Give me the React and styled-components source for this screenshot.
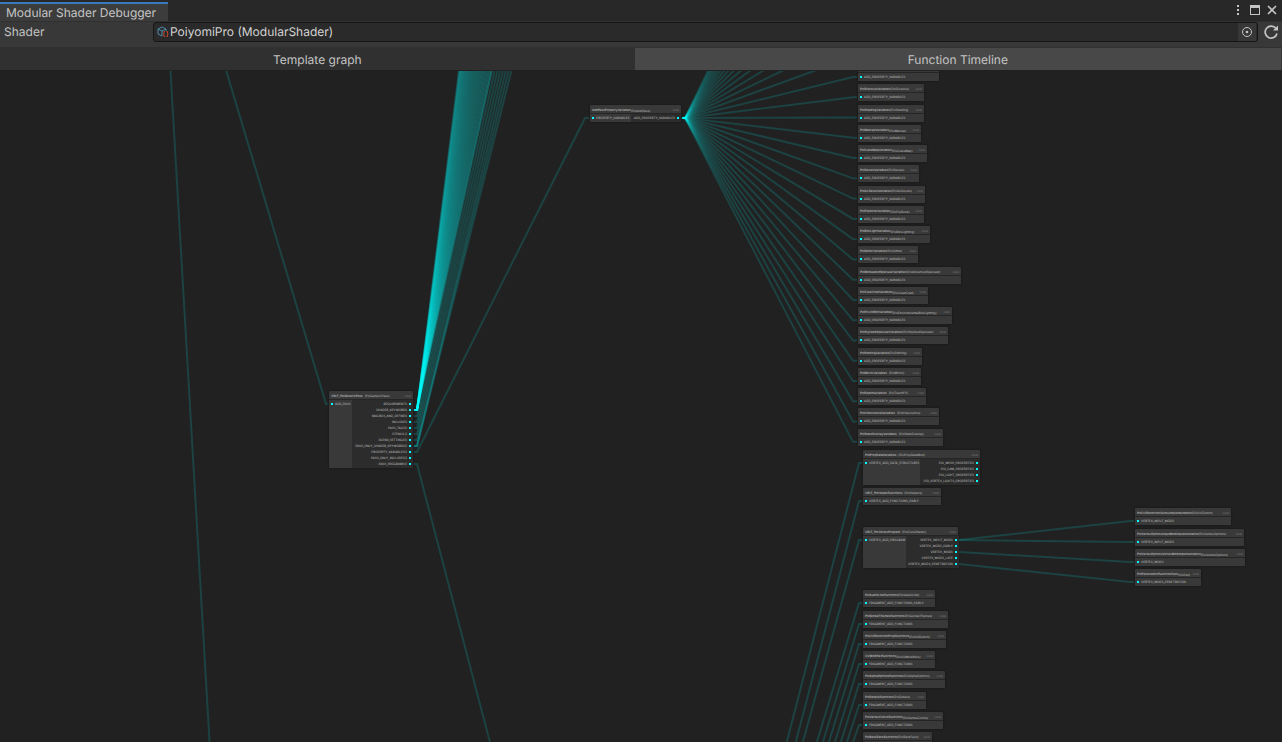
import React from "react";
import styled, { createGlobalStyle } from "styled-components";

const Global = createGlobalStyle`
  * { box-sizing: border-box; }
  html, body, #root { height: 100%; }
  body { margin: 0; background: #212121; color: #c4c4c4; font: 12px/16px Inter, sans-serif; overflow: hidden; text-rendering: geometricPrecision; }
`;

const Window = styled.div`
  display: flex;
  flex-direction: column;
  height: 100%;
  background: #383838;
`;

const TitleBar = styled.header`
  display: flex;
  justify-content: space-between;
  height: 21px;
  flex: none;
  padding-top: 2px;
  background: #282828;
`;

const WindowTab = styled.h1`
  margin: 0;
  padding: 1px 12px 0 6px;
  border-top: 2px solid #3a79bb;
  background: #3c3c3c;
  font-size: 12px;
  font-weight: 400;
  line-height: 16px;
`;

const WindowControls = styled.div`
  display: flex;
  gap: 3px;
  padding: 1px 3px 0 0;
`;

const IconButton = styled.button`
  display: grid;
  place-items: center;
  width: ${(p) => p.$size || 14}px;
  height: ${(p) => p.$size || 14}px;
  padding: 0;
  border: 0;
  background: ${(p) => p.$bg || "none"};
  color: #c4c4c4;
`;

const FieldRow = styled.div`
  display: flex;
  align-items: center;
  height: 26px;
  flex: none;
  padding: 0 3px 5px 4px;
  border-top: 1px solid #303030;
`;

const FieldLabel = styled.label`
  width: 149px;
  flex: none;
`;

const ObjectField = styled.div`
  display: flex;
  flex: 1;
  align-items: center;
  gap: 1px;
  height: 20px;
  margin-right: 5px;
  padding: 0 1px 0 3px;
  border: 1px solid #161616;
  border-radius: 3px;
  background: #2a2a2a;
`;

const ObjectInput = styled.input`
  flex: 1;
  min-width: 0;
  padding: 0;
  border: 0;
  outline: 0;
  background: none;
  color: #d2d2d2;
  font: 12px/16px Inter, sans-serif;
  text-rendering: inherit;
`;

const Tabs = styled.nav`
  display: flex;
  height: 23px;
  flex: none;
  padding-right: 1px;
  border-top: 1px solid #303030;
`;

const Tab = styled.button`
  flex: 1 1 auto;
  padding: 2px 0 0;
  border: 0;
  background: ${(p) => (p.$active ? "#303030" : "#484848")};
  color: #c4c4c4;
  font: 12px/16px Inter, sans-serif;
  text-rendering: inherit;
`;

const Graph = styled.main`
  position: relative;
  flex: 1;
  min-height: 0;
  overflow: hidden;
  border-top: 1px solid #212121;
  background: #212121;
`;

const Wires = styled.svg`
  position: absolute;
  inset: 0;
  width: 100%;
  height: 100%;
  fill: none;
  stroke: #00ffff;
  stroke-opacity: 0.15;
  stroke-width: 2;
`;

const Node = styled.article`
  position: absolute;
  display: flex;
  flex-direction: column;
  gap: 1px;
  border-radius: 1px;
  background: #252525;
  box-shadow: 0 0 1px 1px #1c1c1c;
  color: #b0b0b0;
  font: 500 3px/6px Inter, sans-serif;
  white-space: nowrap;
`;

const NodeTitle = styled.header`
  display: flex;
  height: 8px;
  flex: none;
  padding: 2px 2px 0;
  border-radius: 1px 1px 0 0;
  background: #393939;
`;

const NodeName = styled.span`
  color: #b4b4b4;
  font-weight: 600;
`;

const NodeModule = styled.span`
  flex: 1;
  padding-top: ${(p) => (p.$low ? 1 : 0)}px;
  padding-left: ${(p) => (p.$spaced ? 2 : 0)}px;
`;

const NodeView = styled.span`
  color: #6c6c6c;
`;

const Ports = styled.div`
  display: flex;
  flex: 1;
`;

const PortList = styled.ul`
  display: flex;
  flex: ${(p) => (p.$out ? "1" : "none")};
  flex-direction: column;
  align-items: ${(p) => (p.$out ? "flex-end" : "flex-start")};
  margin: 0;
  padding: 1px 2px 0;
  list-style: none;
  background: ${(p) => (p.$out ? "#2c2c2c" : "#393939")};
`;

const Port = styled.li`
  display: flex;
  flex-direction: ${(p) => (p.$out ? "row-reverse" : "row")};
  align-items: center;
  gap: 2px;
  height: 6px;
  &::before { content: ""; width: 2px; height: 2px; background: #00ffff; }
`;

const ADD = "ADD_PROPERTY_VARIABLES";
const FRAG = "FRAGMENT_ADD_FUNCTIONS";

const variableNodes = [
  [77, 81, "", ""],
  [97, 66, "PoiDissolveVariables", "PoiDissolve"],
  [118, 66, "PoiShadingVariables", "PoiShading"],
  [138, 63, "PoiMatcapVariables", "PoiMatcap", true],
  [158, 69, "PoiCubeMapVariables", "PoiCubeMap", true],
  [178, 61, "PoiDecalsVariables", "PoiDecals"],
  [199, 67, "PoiALDecalsVariables", "PoiALDecals"],
  [219, 66, "PoiFlipbookVariables", "PoiFlipBook", true],
  [239, 72, "PoiRimLightVariables", "PoiRimLighting", true],
  [259, 60, "PoiGlitterVariables", "PoiGlitter"],
  [280, 103, "PoiModulatedSpecularVariables", "PoiAdvancedSpecular"],
  [300, 70, "PoiClearCoatVariables", "PoiClearCoat", true],
  [320, 94, "PoiEnviroRimVariables", "PoiEnvironmentalRimLighting", true],
  [340, 90, "PoiStylizedSpecularVariables", "PoiStylizedSpecular"],
  [361, 64, "PoiPathingVariables", "PoiPathing"],
  [381, 63, "PoiMirrorVariables", "PoiMirror", false, true],
  [401, 68, "PoiDepthVariables", "PoiTouchFX", false, true],
  [421, 81, "PoiIridescenceVariables", "PoiIridescence", false, true],
  [442, 85, "PoiStatsOverlayVariables", "PoiStatsOverlay", false, true],
].map(([y, w, name, module, low, spaced]) => ({ x: 858, y, w, name, module, low, spaced, inputs: [ADD] }));

const functionNodes = [
  [603, 72, "PoiAudioLinkFunctions", "PoiAudioLink", false, ["FRAGMENT_ADD_FUNCTIONS_EARLY"]],
  [624, 85, "PoiGlobalThemesFunctions", "PoiGlobalThemes", false, [FRAG]],
  [644, 83, "PoiUVDistortionPropFunctions", "PoiUVDistort", true, [FRAG]],
  [664, 72, "UVModifierFunctions", "PoiUVModifiers", true, [FRAG]],
  [684, 82, "PoiAlphaOptionsFunctions", "PoiAlphaOptions", false, [FRAG]],
  [705, 63, "PoiDetailsFunctions", "PoiDetails", false, [FRAG]],
  [725, 80, "PoiVertexColorsFunctions", "PoiVertexColors", true, [FRAG]],
  [745, 69, "PoiBackFaceFunctions", "PoiBackFace", false, []],
].map(([y, w, name, module, low, inputs]) => ({ x: 863, y, w, name, module, low, inputs }));

const vertexNodes = [
  [521, 96, "PoiUVDistortionVertexImplementation", "PoiUVDistort", false, "VERTEX_INPUT_MODS"],
  [542, 109, "PoiVertexOptionsInputModImplementation", "PoiVertexOptions", false, "VERTEX_INPUT_MODS"],
  [562, 110, "PoiVertexOptionsVertexModImplementation", "PoiVertexOptions", true, "VERTEX_MODS"],
  [582, 66, "PoiPenetrationFunctionCalls", "PoiPen", true, "VERTEX_MODS_PENETRATION"],
].map(([y, w, name, module, low, input]) => ({ x: 1135, y, w, name, module, low, inputs: [input] }));

const hubNodes = [
  {
    x: 329, y: 404, w: 84, name: "VRLT_PoiGenericPass", module: "PoiGenericPass", spaced: true, split: 23,
    inputs: ["ADD_PASS"],
    outputs: ["REQUIREMENTS", "SHADER_KEYWORDS", "MACROS_AND_DEFINES", "INCLUDES", "PASS_TAGS()", "STENCIL()",
      "BLEND_SETTINGS()", "PASS_ONLY_SHADER_KEYWORDS()", "PROPERTY_VARIABLES()", "PASS_ONLY_INCLUDES()", "PASS_PROGRAMS()"],
  },
  { x: 590, y: 118, w: 91, name: "AddPassPropertyVariables", module: "PoiAddPass", low: true, split: 41, inputs: ["PROPERTY_VARIABLES"], outputs: [ADD] },
  {
    x: 863, y: 463, w: 117, name: "PoiPropDataVariables", module: "PoiPropDataMod", spaced: true, split: 57,
    inputs: ["VERTEX_ADD_DATA_STRUCTURES"],
    outputs: ["POI_MESH_PROPERTIES", "POI_CAM_PROPERTIES", "POI_LIGHT_PROPERTIES", "POI_VERTEX_LIGHTS_PROPERTIES"],
  },
  { x: 863, y: 501, w: 78, name: "VRLT_PoiHelperFunctions", module: "PoiHelpers", spaced: true, inputs: ["VERTEX_ADD_FUNCTIONS_EARLY"] },
  {
    x: 863, y: 540, w: 95, name: "VRLT_PoiVertexProgram", module: "PoiCoreShader", spaced: true, split: 43,
    inputs: ["VERTEX_ADD_PROGRAM"],
    outputs: ["VERTEX_INPUT_MODS", "VERTEX_MODS_EARLY", "VERTEX_MODS", "VERTEX_MODS_LATE", "VERTEX_MODS_PENETRATION"],
  },
];

const nodes = [...hubNodes, ...variableNodes, ...functionNodes, ...vertexNodes];
const GRAPH_TOP = 71;

const wire = (x1, y1, x2, y2) => `M${x1} ${y1}h6L${x2 - 6} ${y2}h6`;

const wires = [
  "M170 60L170.500 71L210 750",
  "M223 60L326 404H330",
  wire(411, 452, 591, 118),
  "M411 464H417L492 750",
  ...Array.from({ length: 34 }, (_, i) => wire(679, 118, 859, 77 + 20.27 * (i - 15))),
  ...Array.from({ length: 37 }, (_, i) => `M411 410H417L${459 + i * 0.55 + i * i * 0.01} 70`),
  ...Array.from({ length: 8 }, (_, i) => `M411 ${416 + Math.min(i, 5) * 6}H417L${492 + i * 2.8} 70`),
  wire(953, 540, 1136, 521),
  wire(953, 540, 1136, 542),
  wire(953, 552, 1136, 562),
  wire(953, 564, 1136, 582),
  "M786 745L859 463H864",
  "M795 745L859 501H864",
  "M802 745L859 540H864",
  ...functionNodes.map((n, i) => `M${816 + i * 6} 745L859 ${n.y}H864`),
];

function GraphNode({ node }) {
  const rows = Math.max(1, node.outputs?.length || 0);
  return (
    <Node style={{ left: node.x, top: node.y - 13 - GRAPH_TOP, width: node.w, height: 11 + rows * 6 }}>
      <NodeTitle>
        {node.name && (
          <>
            <NodeName>{node.name}</NodeName>
            <NodeModule $spaced={node.spaced} $low={node.low}>({node.module})</NodeModule>
            <NodeView>view</NodeView>
          </>
        )}
      </NodeTitle>
      <Ports>
        <PortList style={{ width: node.split || "100%" }}>
          {node.inputs.map((p) => <Port key={p}>{p}</Port>)}
        </PortList>
        {node.outputs && (
          <PortList $out>
            {node.outputs.map((p) => <Port $out key={p}>{p}</Port>)}
          </PortList>
        )}
      </Ports>
    </Node>
  );
}

export default function App() {
  return (
    <Window>
      <Global />
      <TitleBar>
        <WindowTab>Modular Shader Debugger</WindowTab>
        <WindowControls>
          <IconButton aria-label="Menu">
            <svg width="14" height="14" fill="currentColor"><path d="M6 2h2v2H6zM6 6h2v2H6zM6 10h2v2H6z" /></svg>
          </IconButton>
          <IconButton aria-label="Maximize">
            <svg width="14" height="14" fill="currentColor"><path fillRule="evenodd" d="M2 2h10v10H2zM3 5v6h8V5z" /></svg>
          </IconButton>
          <IconButton aria-label="Close">
            <svg width="14" height="14" fill="none" stroke="currentColor" strokeWidth="1.6"><path d="M3 3l8 8M11 3l-8 8" /></svg>
          </IconButton>
        </WindowControls>
      </TitleBar>
      <FieldRow>
        <FieldLabel htmlFor="shader">Shader</FieldLabel>
        <ObjectField>
          <svg width="12" height="12" fill="none">
            <path d="M5 1L9 3V5M5 1L1 3V8L5 10V5L1 3M5 5L9 3" stroke="#4f8ba8" />
            <path d="M8 5.500H7V7.500L6.300 8L7 8.500V10.500H8M9.500 5.500H10.500V7.500L11.300 8L10.500 8.500V10.500H9.500" stroke="#c8472d" />
          </svg>
          <ObjectInput id="shader" readOnly value="PoiyomiPro (ModularShader)" />
          <IconButton $size={18} $bg="#373737" aria-label="Select object">
            <svg width="12" height="12" fill="none" stroke="currentColor"><circle cx="6" cy="6" r="4.500" /><circle cx="6" cy="6" r="1.300" fill="currentColor" stroke="none" /></svg>
          </IconButton>
        </ObjectField>
        <IconButton $size={16} aria-label="Refresh">
          <svg width="16" height="16" fill="none" stroke="currentColor" strokeWidth="1.700">
            <path d="M13 4.500A6 6 0 1 0 14 9.500" /><path d="M15 1.500V6.500H10z" fill="currentColor" stroke="none" />
          </svg>
        </IconButton>
      </FieldRow>
      <Tabs>
        <Tab $active>Template graph</Tab>
        <Tab>Function Timeline</Tab>
      </Tabs>
      <Graph>
        <Wires>
          <g transform={`translate(0 ${-GRAPH_TOP})`}>
            {wires.map((d, i) => <path key={i} d={d} />)}
          </g>
        </Wires>
        {nodes.map((node) => <GraphNode key={`${node.x}-${node.y}`} node={node} />)}
      </Graph>
    </Window>
  );
}
